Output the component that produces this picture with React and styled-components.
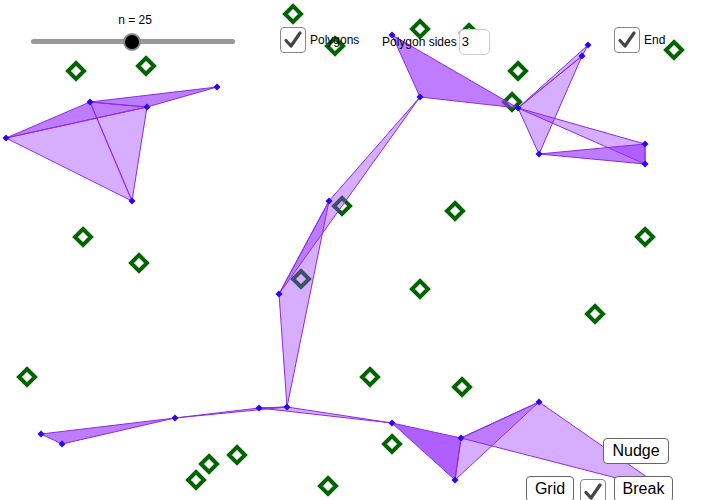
import React from 'react';
import styled, { createGlobalStyle } from 'styled-components';

const GlobalStyle = createGlobalStyle`
  html, body { margin: 0; padding: 0; background: #fff; }
  body { font-family: "Liberation Sans", Arial, sans-serif; }
`;

// Applet canvas; every widget sits at its own spot on it
const Stage = styled.div`
  position: relative;
  width: 711px;
  height: 500px;
  overflow: hidden;
  background: #fff;
`;

const Drawing = styled.svg`
  position: absolute;
  left: 0;
  top: 0;
`;

const Widget = styled.div`
  position: absolute;
  left: ${p => p.x}px;
  top: ${p => p.y}px;
  display: flex;
  align-items: center;
`;

const SliderBox = styled.div`
  width: 210px;
  display: flex;
  flex-direction: column;
  align-items: center;
  gap: 12px;
`;

const SliderLabel = styled.div`
  font-size: 12px;
  color: #000;
  padding-left: 4px;
`;

const Track = styled.div`
  position: relative;
  width: 204px;
  height: 5px;
  border-radius: 3px;
  background: #999;
`;

const Knob = styled.div`
  position: absolute;
  top: 50%;
  left: ${p => p.pos}%;
  width: 14px;
  height: 14px;
  margin: -9px 0 0 -9px;
  border-radius: 50%;
  background: #000;
  border: 2px solid #8a8a8a;
`;

const Box = styled.div`
  width: ${p => p.size}px;
  height: ${p => p.size}px;
  box-sizing: border-box;
  border: 1px solid #888;
  border-radius: 4px;
  background: #fff;
  display: flex;
  align-items: center;
  justify-content: center;
`;

const Label = styled.span`
  font-size: 12px;
  color: #000;
  margin-left: ${p => p.gap}px;
`;

const SidesInput = styled.div`
  width: 31px;
  height: 26px;
  margin-left: 2px;
  box-sizing: border-box;
  border: 1px solid #ccc;
  border-radius: 5px;
  background: #fff;
  font-size: 13px;
  line-height: 24px;
  padding-left: 2px;
`;

const Button = styled.div`
  width: ${p => p.w}px;
  height: 26px;
  box-sizing: border-box;
  border: 1px solid #666;
  border-radius: 4px;
  background: #fff;
  font-size: 16px;
  color: #000;
  display: flex;
  align-items: center;
  justify-content: center;
`;

const Check = ({ size = 26 }) => (
  <Box size={size}>
    <svg width={size - 6} height={size - 6} viewBox="0 0 20 20">
      <path d="M3 10.5 L8 16 L17 3" fill="none" stroke="#444" strokeWidth="3.2" strokeLinecap="round" strokeLinejoin="round" />
    </svg>
  </Box>
);

const greens = [
  [293, 14], [420, 29], [469, 33], [335, 46], [76, 71], [146, 66], [518, 71], [674, 50],
  [512, 102], [342, 206], [455, 211], [83, 237], [139, 263], [645, 237], [301, 279],
  [420, 289], [595, 314], [27, 377], [370, 377], [462, 387], [392, 444], [237, 455],
  [209, 464], [196, 480], [328, 486],
];

// [points, layers]: layers stacks the same fill to get the darker overlaps
const triangles = [
  [[[6, 138], [90, 102], [147, 107]], 2],
  [[[6, 138], [147, 107], [132, 201]], 1],
  [[[90, 102], [217, 87], [147, 107]], 2],
  [[[392, 35], [420, 97], [518, 108]], 2],
  [[[518, 108], [588, 45], [582, 56]], 1],
  [[[518, 108], [582, 56], [539, 154]], 1],
  [[[518, 108], [645, 144], [645, 164]], 1],
  [[[539, 154], [645, 144], [645, 164]], 2],
  [[[420, 97], [329, 201], [279, 294]], 1],
  [[[329, 201], [279, 294], [287, 407]], 1],
  [[[41, 434], [62, 444], [175, 418]], 2],
  [[[175, 418], [259, 408], [287, 407]], 1],
  [[[259, 408], [287, 407], [392, 423]], 1],
  [[[392, 423], [461, 438], [455, 480]], 3],
  [[[461, 438], [455, 480], [539, 402]], 1],
  [[[461, 438], [539, 402], [667, 491]], 1],
];

const vertices = [
  [6, 138], [90, 102], [147, 107], [217, 87], [132, 201],
  [392, 35], [420, 97], [518, 108], [588, 45], [582, 56], [539, 154], [645, 144], [645, 164],
  [329, 201], [279, 294], [287, 407], [259, 408], [175, 418], [41, 434], [62, 444],
  [392, 423], [461, 438], [455, 480], [539, 402],
];

const diamond = (x, y, r) => `${x},${y - r} ${x + r},${y} ${x},${y + r} ${x - r},${y}`;

const App = () => (
  <>
    <GlobalStyle />
    <Stage>
      <Drawing width="711" height="500">
        {greens.map(([x, y], i) => (
          <polygon key={'g' + i} points={diamond(x, y, 8)} fill="none" stroke="#006400" strokeWidth="4" />
        ))}
        {triangles.map(([t, layers], i) => (
          <polygon
            key={'t' + i}
            points={t.map(p => p.join(',')).join(' ')}
            fill="#9933ff"
            fillOpacity={1 - Math.pow(0.6, layers)}
            stroke="#8a2be2"
            strokeWidth="1"
            strokeLinejoin="round"
          />
        ))}
        <line x1="90" y1="102" x2="132" y2="201" stroke="#8a2be2" strokeWidth="1.2" />
        {vertices.map(([x, y], i) => (
          <polygon key={'v' + i} points={diamond(x, y, 3.5)} fill="#2a00ff" />
        ))}
      </Drawing>

      <Widget x={28} y={13}>
        <SliderBox>
          <SliderLabel>n = 25</SliderLabel>
          <Track>
            <Knob pos={49.5} />
          </Track>
        </SliderBox>
      </Widget>

      <Widget x={280} y={27}>
        <Check />
        <Label gap={4}>Polygons</Label>
      </Widget>

      <Widget x={382} y={29}>
        <Label gap={0}>Polygon sides</Label>
        <SidesInput>3</SidesInput>
      </Widget>

      <Widget x={614} y={27}>
        <Check />
        <Label gap={4}>End</Label>
      </Widget>

      <Widget x={603} y={438}>
        <Button w={66}>Nudge</Button>
      </Widget>
      <Widget x={526} y={476}>
        <Button w={48}>Grid</Button>
      </Widget>
      <Widget x={580} y={479}>
        <Check />
      </Widget>
      <Widget x={614} y={476}>
        <Button w={59}>Break</Button>
      </Widget>
    </Stage>
  </>
);

export default App;
